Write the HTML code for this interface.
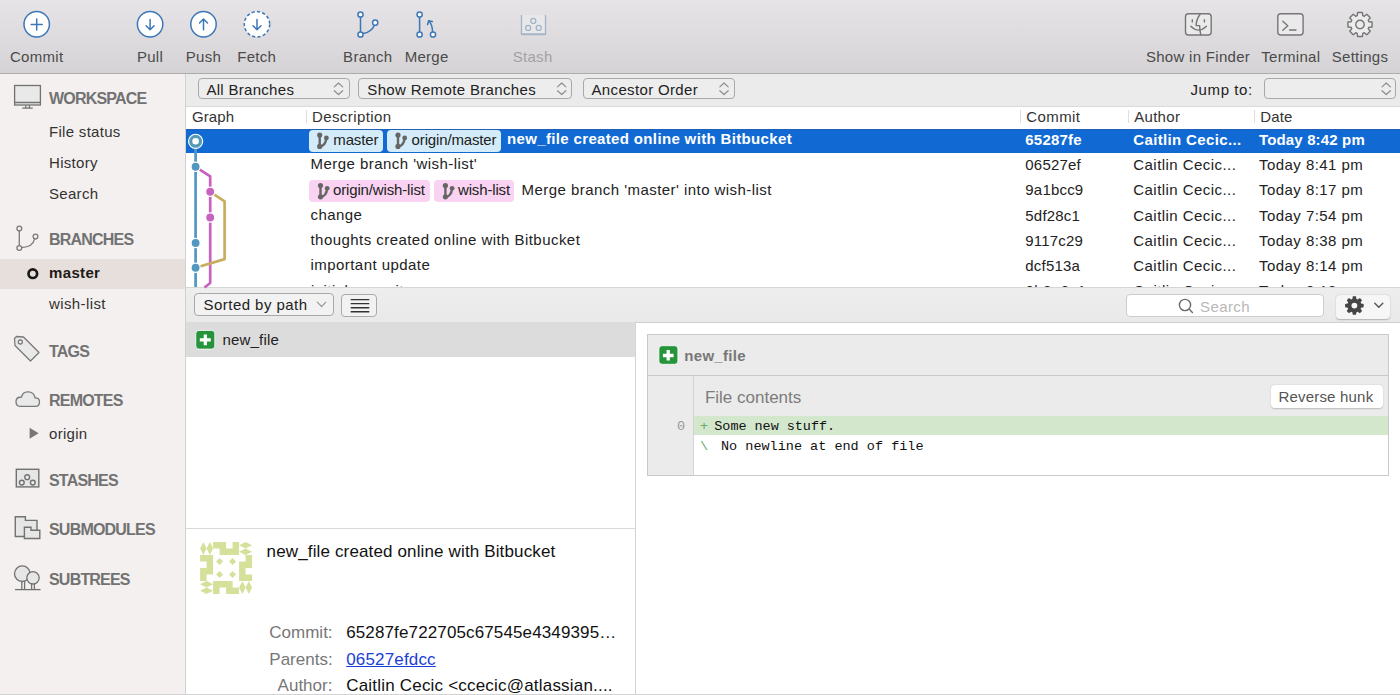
<!DOCTYPE html>
<html><head><meta charset="utf-8">
<style>
html,body{margin:0;padding:0;width:1400px;height:695px;overflow:hidden;background:#fff;}
body{position:relative;font-family:"Liberation Sans",sans-serif;color:#222;}
.a{position:absolute;}
.t{position:absolute;white-space:pre;line-height:15px;font-size:15px;}
#toolbar{left:0;top:0;width:1400px;height:73px;background:linear-gradient(#e6e4e6,#d5d3d5);border-bottom:1px solid #acacac;}
.tl{position:absolute;top:49px;width:120px;text-align:center;font-size:15px;line-height:15px;color:#4a4a4a;white-space:pre;letter-spacing:0.3px;}
#sidebar{left:0;top:74px;width:185px;height:621px;background:#f3f0ef;border-right:1px solid #d3d1d0;}
.sh{font-weight:bold;color:#727272;font-size:16px;letter-spacing:-0.8px;}
.si{color:#333;}
#filter{left:186px;top:74px;width:1214px;height:32px;background:#ebebeb;border-bottom:1px solid #dadada;}
.dd{position:absolute;border:1px solid #a9a9a9;border-radius:4px;background:#ededed;box-sizing:border-box;}
#hdr{left:186px;top:107px;width:1214px;height:22px;background:#fff;}
.hd{color:#333;}
.div{position:absolute;width:1px;background:#dedede;top:110px;height:13px;}
.row{color:#222;letter-spacing:0.45px;}
.sel{color:#fff;font-weight:bold;letter-spacing:0.35px;}
.badge{position:absolute;border-radius:4px;height:22px;}
.bb{background:#d4ecf9;}
.bp{background:#f9d3f1;}
#bbar{left:186px;top:287px;width:1214px;height:34px;background:linear-gradient(#eeeeee,#e9e9e9);border-top:1px solid #d6d6d6;border-bottom:1px solid #cfcfcf;}
#lpane{left:186px;top:322px;width:449px;height:373px;background:#fff;border-right:1px solid #d4d4d4;}
</style></head><body>

<!-- TOOLBAR -->
<div id="toolbar" class="a"></div>
<div class="tl" style="left:-23.35px">Commit</div>
<div class="tl" style="left:90px">Pull</div>
<div class="tl" style="left:143.5px">Push</div>
<div class="tl" style="left:196.75px">Fetch</div>
<div class="tl" style="left:307.75px">Branch</div>
<div class="tl" style="left:366.65px">Merge</div>
<div class="tl" style="left:472.65px;color:#a3a3a3">Stash</div>
<div class="tl" style="left:1138px">Show in Finder</div>
<div class="tl" style="left:1230.8px">Terminal</div>
<div class="tl" style="left:1300px">Settings</div>

<!-- SIDEBAR -->
<div id="sidebar" class="a"></div>
<div class="a" style="left:0;top:258.8px;width:185px;height:29.9px;background:#e6dfdb"></div>
<div class="t sh" style="left:49px;top:90.5px">WORKSPACE</div>
<div class="t si" style="left:49px;top:124px;letter-spacing:0.3px">File status</div>
<div class="t si" style="left:49px;top:155px;letter-spacing:0.3px">History</div>
<div class="t si" style="left:49px;top:186px;letter-spacing:0.3px">Search</div>
<div class="t sh" style="left:49px;top:232.4px">BRANCHES</div>
<div class="t si" style="left:49px;top:265.2px;font-weight:bold;color:#1e1a18;letter-spacing:0.35px">master</div>
<div class="t si" style="left:49px;top:296px;letter-spacing:0.4px">wish-list</div>
<div class="t sh" style="left:49px;top:343.6px">TAGS</div>
<div class="t sh" style="left:49px;top:392.7px">REMOTES</div>
<div class="t si" style="left:49px;top:426px;letter-spacing:0.3px">origin</div>
<div class="t sh" style="left:49px;top:472.7px">STASHES</div>
<div class="t sh" style="left:49px;top:522px">SUBMODULES</div>
<div class="t sh" style="left:49px;top:571.6px">SUBTREES</div>

<!-- FILTER BAR -->
<div id="filter" class="a"></div>
<div class="dd" style="left:197.5px;top:78.2px;width:152px;height:20.8px"></div>
<div class="t" style="left:206.4px;top:81.5px;letter-spacing:0.3px">All Branches</div>
<div class="dd" style="left:358.2px;top:78.2px;width:214.3px;height:20.8px"></div>
<div class="t" style="left:367.3px;top:81.5px;letter-spacing:0.35px">Show Remote Branches</div>
<div class="dd" style="left:582.5px;top:78.2px;width:152px;height:20.8px"></div>
<div class="t" style="left:591.5px;top:81.5px;letter-spacing:0.35px">Ancestor Order</div>
<div class="t" style="left:1190.5px;top:81.5px;letter-spacing:0.6px">Jump to:</div>
<div class="dd" style="left:1264px;top:78.2px;width:132.3px;height:20.8px"></div>

<!-- HEADER -->
<div id="hdr" class="a"></div>
<div class="t hd" style="left:191.9px;top:109.2px;letter-spacing:0.1px">Graph</div>
<div class="div" style="left:306px"></div>
<div class="t hd" style="left:312px;top:109.2px;letter-spacing:0.4px">Description</div>
<div class="div" style="left:1020px"></div>
<div class="t hd" style="left:1026.3px;top:109.2px;letter-spacing:0.4px">Commit</div>
<div class="div" style="left:1128px"></div>
<div class="t hd" style="left:1134.2px;top:109.2px;letter-spacing:0.3px">Author</div>
<div class="div" style="left:1253.5px"></div>
<div class="t hd" style="left:1260.3px;top:109.2px;letter-spacing:0.1px">Date</div>

<!-- ROWS -->
<div class="a" style="left:186px;top:128.9px;width:1214px;height:23.8px;background:#116ad4;box-shadow:inset 0 1px 0 #2160b8"></div>
<div class="badge bb" style="left:308.6px;top:129.7px;width:74px"></div>
<div class="t" style="left:333.3px;top:131.6px;color:#222;letter-spacing:-0.15px">master</div>
<div class="badge bb" style="left:386.9px;top:129.7px;width:114px"></div>
<div class="t" style="left:411.6px;top:131.6px;color:#222;letter-spacing:-0.15px">origin/master</div>
<div class="t sel" style="left:507px;top:131.4px">new_file created online with Bitbucket</div>

<div class="t row" style="left:310.6px;top:156px">Merge branch 'wish-list'</div>

<div class="badge bp" style="left:309.4px;top:180px;width:120.2px"></div>
<div class="t" style="left:333px;top:182px;color:#222;letter-spacing:-0.15px">origin/wish-list</div>
<div class="badge bp" style="left:434.3px;top:180px;width:80.2px"></div>
<div class="t" style="left:458px;top:182px;color:#222;letter-spacing:-0.15px">wish-list</div>
<div class="t row" style="left:521.6px;top:181.5px">Merge branch 'master' into wish-list</div>

<div class="t row" style="left:310.5px;top:206.8px">change</div>
<div class="t row" style="left:310.5px;top:232.1px">thoughts created online with Bitbucket</div>
<div class="t row" style="left:310.5px;top:257.4px">important update</div>
<div class="a" style="left:186px;top:280px;width:1214px;height:7px;overflow:hidden">
  <div class="t row" style="left:125px;top:2.7px">initial commit</div>
  <div class="t row" style="left:839.5px;top:2.7px">0b3a2c1</div>
  <div class="t row" style="left:947.5px;top:2.7px">Caitlin Cecic...</div>
  <div class="t row" style="left:1073px;top:2.7px">Today 8:13 pm</div>
</div>

<div class="t sel" style="letter-spacing:0.2px;left:1025.3px;top:131.8px">65287fe</div>
<div class="t sel" style="left:1133.3px;top:131.8px">Caitlin Cecic...</div>
<div class="t sel" style="letter-spacing:0.15px;left:1259px;top:131.8px">Today 8:42 pm</div>

<div class="t row" style="letter-spacing:0.2px;left:1025.3px;top:157px">06527ef</div>
<div class="t row" style="left:1133.3px;top:157px">Caitlin Cecic...</div>
<div class="t row" style="left:1259px;top:157px">Today 8:41 pm</div>
<div class="t row" style="letter-spacing:0.2px;left:1025.3px;top:182.3px">9a1bcc9</div>
<div class="t row" style="left:1133.3px;top:182.3px">Caitlin Cecic...</div>
<div class="t row" style="left:1259px;top:182.3px">Today 8:17 pm</div>
<div class="t row" style="letter-spacing:0.2px;left:1025.3px;top:207.6px">5df28c1</div>
<div class="t row" style="left:1133.3px;top:207.6px">Caitlin Cecic...</div>
<div class="t row" style="left:1259px;top:207.6px">Today 7:54 pm</div>
<div class="t row" style="letter-spacing:0.2px;left:1025.3px;top:232.9px">9117c29</div>
<div class="t row" style="left:1133.3px;top:232.9px">Caitlin Cecic...</div>
<div class="t row" style="left:1259px;top:232.9px">Today 8:38 pm</div>
<div class="t row" style="letter-spacing:0.2px;left:1025.3px;top:258.2px">dcf513a</div>
<div class="t row" style="left:1133.3px;top:258.2px">Caitlin Cecic...</div>
<div class="t row" style="left:1259px;top:258.2px">Today 8:14 pm</div>

<!-- BOTTOM BAR -->
<div id="bbar" class="a"></div>
<div class="dd" style="left:194.3px;top:292.9px;width:139.3px;height:22.8px;background:#f2f2f2"></div>
<div class="t" style="left:203.6px;top:296.9px;letter-spacing:0.45px">Sorted by path</div>
<div class="dd" style="left:341.4px;top:294.3px;width:35.7px;height:22.8px;background:#f2f2f2"></div>
<div class="a" style="left:1126px;top:294.2px;width:198.4px;height:23.2px;background:#fff;border:1px solid #cdcdcd;border-radius:4px;box-sizing:border-box"></div>
<div class="t" style="left:1200px;top:298.6px;color:#b8b8b8;letter-spacing:0.4px">Search</div>
<div class="a" style="left:1335.8px;top:294.5px;width:54px;height:24px;background:#f6f6f6;border-radius:4px;box-shadow:0 0.5px 1.5px rgba(0,0,0,0.25)"></div>

<!-- LOWER LEFT -->
<div id="lpane" class="a"></div>
<div class="a" style="left:186px;top:322px;width:449px;height:35.3px;background:#dcdcdc"></div>
<div class="t" style="left:222.4px;top:332px;letter-spacing:0.2px">new_file</div>
<div class="a" style="left:186px;top:527.5px;width:449px;height:1px;background:#d9d9d9"></div>
<div class="t" style="left:266.6px;top:544.2px;font-size:17px;letter-spacing:0.14px;color:#111">new_file created online with Bitbucket</div>
<div class="t" style="left:269.3px;top:624.9px;color:#777;font-size:17px">Commit:</div>
<div class="t" style="left:346.2px;top:624.9px;color:#111;font-size:17px;letter-spacing:0.13px">65287fe722705c67545e4349395…</div>
<div class="t" style="left:269.3px;top:651.8px;color:#777;font-size:17px">Parents:</div>
<div class="t" style="left:346.2px;top:651.8px;color:#1a3fd6;text-decoration:underline;font-size:17px;letter-spacing:0.17px">06527efdcc</div>
<div class="t" style="left:277.6px;top:677.9px;color:#777;font-size:17px">Author:</div>
<div class="t" style="left:346.2px;top:677.9px;color:#111;font-size:17px;letter-spacing:0.2px">Caitlin Cecic &lt;ccecic@atlassian....</div>

<!-- DIFF -->
<div class="a" style="left:647px;top:333.7px;width:742px;height:142px;border:1px solid #c9c9c9;box-sizing:border-box;background:#fff"></div>
<div class="a" style="left:648px;top:334.7px;width:740px;height:40px;background:#ebebeb;border-bottom:1px solid #c9c9c9"></div>
<div class="a" style="left:648px;top:375.7px;width:740px;height:40px;background:#ebebeb"></div>
<div class="a" style="left:648px;top:375.7px;width:44.5px;height:99px;background:#ebebeb;border-right:1px solid #d4d4d4"></div>
<div class="a" style="left:693.5px;top:415.8px;width:694.5px;height:19.1px;background:#d3e7cd"></div>
<div class="t" style="left:684.3px;top:347.9px;font-weight:bold;color:#777;letter-spacing:0.3px">new_file</div>
<div class="t" style="left:704.9px;top:389.7px;color:#7c7c7c;font-size:17px">File contents</div>
<div class="a" style="left:1270.5px;top:384.7px;width:112.3px;height:23.8px;background:#fff;border-radius:4px;box-shadow:0 0.5px 1.5px rgba(0,0,0,0.2)"></div>
<div class="t" style="left:1278.4px;top:389.2px;color:#555;letter-spacing:0.2px">Reverse hunk</div>
<div class="t" style="left:677px;top:419.9px;font-family:'Liberation Mono',monospace;font-size:13.5px;line-height:13px;color:#999">0</div>
<div class="t" style="left:700px;top:419.9px;font-family:'Liberation Mono',monospace;font-size:13.5px;line-height:13px;color:#6aa86a">+</div>
<div class="t" style="left:714.3px;top:419.9px;font-family:'Liberation Mono',monospace;font-size:13.5px;line-height:13px;color:#111;letter-spacing:-0.05px">Some new stuff.</div>
<div class="t" style="left:700px;top:439.8px;font-family:'Liberation Mono',monospace;font-size:13.5px;line-height:13px;color:#6aa86a">\</div>
<div class="t" style="left:721px;top:439.8px;font-family:'Liberation Mono',monospace;font-size:13.5px;line-height:13px;color:#111;letter-spacing:0px">No newline at end of file</div>

<div class="a" style="left:0;top:694px;width:1400px;height:1px;background:#d2d2d2"></div>
<!-- ICONS OVERLAY -->
<svg class="a" style="left:0;top:0" width="1400" height="695" viewBox="0 0 1400 695">
<g fill="#fff" stroke="#3c77b8" stroke-width="1.5" stroke-linecap="round" stroke-linejoin="round">
 <circle cx="36.7" cy="24.3" r="12.7"/>
 <path d="M31.2 24.5H42.2M36.7 19V30" fill="none"/>
 <circle cx="150.1" cy="24.3" r="12.7"/>
 <path d="M150.1 19.5V29.8M146.1 25.8L150.1 29.8L154.1 25.8" fill="none"/>
 <circle cx="203.5" cy="24.3" r="12.7"/>
 <path d="M203.5 19V29.8M199.5 23L203.5 19L207.5 23" fill="none"/>
 <circle cx="257" cy="24.3" r="12.7" stroke-dasharray="3.2 2.2" stroke-linecap="butt"/>
 <path d="M257 19.5V29.8M253 25.8L257 29.8L261 25.8" fill="none"/>
 <path d="M360.5 17.1V31.9M362.9 33.6Q371.5 32 374.4 25.2" fill="none"/>
 <circle cx="360.5" cy="14.5" r="2.6"/><circle cx="360.5" cy="34.5" r="2.6"/><circle cx="375.2" cy="22.7" r="2.6"/>
 <path d="M419.6 17.1V31.9M432.6 31.9Q432.5 25 429 21" fill="none"/>
 <path d="M427.6 24.6L428.6 20.8L432.3 21.6" fill="none"/>
 <circle cx="419.6" cy="14.5" r="2.6"/><circle cx="419.6" cy="34.5" r="2.6"/><circle cx="433" cy="34.5" r="2.6"/>
</g>
<g fill="none" stroke="#a3b4c5" stroke-width="1.3">
 <path d="M521.5 15V34.2H545.5V15" fill="#e8e8eb"/>
 <path d="M521.5 34.4H545.5" stroke-width="1.6"/>
 <circle cx="533.3" cy="20.9" r="2.5"/><circle cx="528.2" cy="27.9" r="2.5"/><circle cx="538.7" cy="27.9" r="2.5"/>
</g>
<g fill="none" stroke="#767676" stroke-width="1.4" stroke-linecap="round" stroke-linejoin="round">
 <rect x="1185.5" y="13.8" width="25.7" height="21.2" rx="3" fill="#eaeaea"/>
 <path d="M1200 14.5Q1196 20 1196.2 25.6H1199.6Q1199.8 31 1200.8 34.8"/>
 <path d="M1190.8 26.2Q1198.6 34 1206.4 26.2"/>
 <path d="M1192.3 19.8V22M1204.4 19.8V22"/>
 <rect x="1277.8" y="13.8" width="25.3" height="21.2" rx="3" fill="#eaeaea"/>
 <path d="M1282.8 21.3L1287.8 25.8L1282.8 30.3M1289.6 30H1296"/>
</g>
<g transform="translate(1360,24.5)">
 <path id="gear" fill="#ececec" stroke="#767676" stroke-width="1.4" stroke-linejoin="round" d="M8.88 -2.75 L12.05 -2.44 L12.05 2.44 L8.88 2.75 L8.23 4.34 L10.25 6.80 L6.80 10.25 L4.34 8.23 L2.75 8.88 L2.44 12.05 L-2.44 12.05 L-2.75 8.88 L-4.34 8.23 L-6.80 10.25 L-10.25 6.80 L-8.23 4.34 L-8.88 2.75 L-12.05 2.44 L-12.05 -2.44 L-8.88 -2.75 L-8.23 -4.34 L-10.25 -6.80 L-6.80 -10.25 L-4.34 -8.23 L-2.75 -8.88 L-2.44 -12.05 L2.44 -12.05 L2.75 -8.88 L4.34 -8.23 L6.80 -10.25 L10.25 -6.80 L8.23 -4.34Z"/>
 <circle cx="0" cy="0" r="4.2" fill="none" stroke="#767676" stroke-width="1.4"/>
</g>
<!-- sidebar icons -->
<g fill="none" stroke="#727272" stroke-width="1.3">
 <rect x="14.6" y="85.5" width="25.8" height="19.5" fill="#e9e9e9"/>
 <path d="M14.6 102.5H40.4" stroke-width="1.5"/>
 <path d="M25.8 105.3V107.8M29.4 105.3V107.8M22.3 108.2H32.7" stroke-width="1.3"/>
</g>
<g fill="none" stroke="#7a7a7a" stroke-width="1.3">
 <path d="M19.3 231V245.5M21.5 247.6Q33 247 34.5 239"/>
 <circle cx="19.3" cy="228.6" r="2.4" fill="#f3f0ef"/><circle cx="19.3" cy="248" r="2.4" fill="#f3f0ef"/><circle cx="35.5" cy="236.6" r="2.4" fill="#f3f0ef"/>
</g>
<circle cx="32.8" cy="273.7" r="4.3" fill="none" stroke="#1a1a1a" stroke-width="2.7"/>
<g fill="#e9e9e9" stroke="#7a7a7a" stroke-width="1.3" stroke-linejoin="round">
 <path d="M14.5 338.5L15 345.5L30.5 361L39 352.5L23.5 337L16.5 336.5Z"/>
 <circle cx="20.3" cy="342" r="2" fill="#f4f4f4"/>
 <path d="M19.8 406.3H35.5Q39.5 406.3 39.5 402Q39.5 397.5 35 397.8Q34 391.5 27.5 391.8Q22.5 392 21.5 397Q16 397 16 401.5Q16 406.3 19.8 406.3Z"/>
</g>
<path d="M29.6 427.8L38.6 433.3L29.6 438.8Z" fill="#777"/>
<g fill="#e6e6e6" stroke="#727272" stroke-width="1.4">
 <rect x="16.3" y="469.3" width="22.5" height="17.6"/>
 <circle cx="27.2" cy="477.2" r="2.4" fill="#ececec"/><circle cx="21.8" cy="482.6" r="2.4" fill="#ececec"/><circle cx="32.8" cy="482.6" r="2.4" fill="#ececec"/>
</g>
<g fill="#e6e6e6" stroke="#727272" stroke-width="1.4" stroke-linejoin="miter">
 <path d="M15.3 516.8H25.4V520.4H37V536.5H15.3Z"/>
 <path d="M24.4 527.3H31V530.2H39.8V538.5H24.4Z"/>
</g>
<g fill="#e6e6e6" stroke="#727272" stroke-width="1.3">
 <path d="M21.8 581V589.3M24.6 581V589.3M31.6 583.5V589.3M34.4 583.5V589.3" fill="none"/>
 <circle cx="22.3" cy="573.7" r="7.8"/>
 <circle cx="33" cy="577.8" r="6.2"/>
 <path d="M15 589.6H40.6" fill="none"/>
</g>
<!-- graph -->
<g fill="none" stroke-width="2.7" stroke-linejoin="round">
 <path d="M195.6 141.3V287" stroke="#5297bf"/>
 <path d="M195.6 166.8L210.2 176.4V283L204.5 287.5" stroke="#c862c0"/>
 <path d="M210.2 191.8L224.6 201.4V259.1L195.6 267.7" stroke="#c9ad5f"/>
</g>
<g stroke="#fff" stroke-width="1.3">
 <circle cx="195.6" cy="141.3" r="7" fill="#fff"/>
 <circle cx="195.6" cy="166.8" r="4.6" fill="#5297bf"/>
 <circle cx="210.2" cy="191.8" r="4.6" fill="#c862c0"/>
 <circle cx="210.2" cy="217.5" r="4.6" fill="#c862c0"/>
 <circle cx="195.6" cy="243" r="4.6" fill="#5297bf"/>
 <circle cx="195.6" cy="267.7" r="4.6" fill="#5297bf"/>
</g>
<circle cx="195.6" cy="141.3" r="4.9" fill="#fff" stroke="#549bb8" stroke-width="3.2"/>

<!-- chevrons -->
<g fill="none" stroke="#8e8e8e" stroke-width="1.2" stroke-linecap="round" stroke-linejoin="round">
 <path d="M334.3 86.9L338.5 83L342.7 86.9M334.3 90.7L338.5 94.5L342.7 90.7"/>
 <path d="M557.5 86.9L561.7 83L565.9 86.9M557.5 90.7L561.7 94.5L565.9 90.7"/>
 <path d="M719.8 86.9L724 83L728.2 86.9M719.8 90.7L724 94.5L728.2 90.7"/>
 <path d="M1382 86.9L1386.2 83L1390.4 86.9M1382 90.7L1386.2 94.5L1390.4 90.7"/>
 <path d="M317.3 302.2L321.6 306.5L325.9 302.2" stroke="#9a9a9a"/>
</g>
<g stroke="#333" stroke-width="1.4">
 <path d="M350.7 299.6H369.3M350.7 303.6H369.3M350.7 307.7H369.3M350.7 311.8H369.3"/>
</g>
<g fill="none" stroke="#6a6a6a" stroke-width="1.4" stroke-linecap="round">
 <circle cx="1185" cy="305" r="5.6"/>
 <path d="M1189.1 309.1L1192.4 312.6"/>
</g>
<g transform="translate(1354.4,305.6)">
 <path id="gear2" fill="#454545" d="M6.69 -2.07 L9.26 -1.59 L9.26 1.59 L6.69 2.07 L6.19 3.27 L7.68 5.43 L5.43 7.68 L3.27 6.19 L2.07 6.69 L1.59 9.26 L-1.59 9.26 L-2.07 6.69 L-3.27 6.19 L-5.43 7.68 L-7.68 5.43 L-6.19 3.27 L-6.69 2.07 L-9.26 1.59 L-9.26 -1.59 L-6.69 -2.07 L-6.19 -3.27 L-7.68 -5.43 L-5.43 -7.68 L-3.27 -6.19 L-2.07 -6.69 L-1.59 -9.26 L1.59 -9.26 L2.07 -6.69 L3.27 -6.19 L5.43 -7.68 L7.68 -5.43 L6.19 -3.27Z"/>
 <circle r="2.9" fill="#f6f6f6"/>
</g>
<path d="M1374.8 303.3L1378.8 307.3L1382.8 303.3" fill="none" stroke="#555" stroke-width="1.4" stroke-linecap="round" stroke-linejoin="round"/>
<!-- badge icons -->
<g transform="translate(319.7,135.1)"><g fill="none" stroke="#666" stroke-width="2.4" stroke-linecap="round"><path d="M0 0V11M0.2 11.3Q5.8 11 6.7 2.8"/></g><g fill="#666"><circle cx="0" cy="0" r="2.6"/><circle cx="6.7" cy="2.8" r="2.4"/><circle cx="0" cy="11.3" r="2.6"/></g></g>
<g transform="translate(398,135.1)"><g fill="none" stroke="#666" stroke-width="2.4" stroke-linecap="round"><path d="M0 0V11M0.2 11.3Q5.8 11 6.7 2.8"/></g><g fill="#666"><circle cx="0" cy="0" r="2.6"/><circle cx="6.7" cy="2.8" r="2.4"/><circle cx="0" cy="11.3" r="2.6"/></g></g>
<g transform="translate(320.5,185.5)"><g fill="none" stroke="#666" stroke-width="2.4" stroke-linecap="round"><path d="M0 0V11M0.2 11.3Q5.8 11 6.7 2.8"/></g><g fill="#666"><circle cx="0" cy="0" r="2.6"/><circle cx="6.7" cy="2.8" r="2.4"/><circle cx="0" cy="11.3" r="2.6"/></g></g>
<g transform="translate(445.4,185.5)"><g fill="none" stroke="#666" stroke-width="2.4" stroke-linecap="round"><path d="M0 0V11M0.2 11.3Q5.8 11 6.7 2.8"/></g><g fill="#666"><circle cx="0" cy="0" r="2.6"/><circle cx="6.7" cy="2.8" r="2.4"/><circle cx="0" cy="11.3" r="2.6"/></g></g>

<!-- green plus icons -->
<g>
 <rect x="195.8" y="330.4" width="19" height="18.7" rx="3.2" fill="#25943b" stroke="#fff" stroke-width="0.8"/>
 <path d="M199.8 339.8H210.8M205.3 334.4V345.2" stroke="#fff" stroke-width="3.2"/>
 <rect x="658.9" y="345.7" width="19" height="18.6" rx="3.2" fill="#25943b" stroke="#fff" stroke-width="0.8"/>
 <path d="M662.9 355.5H673.6M668.2 350V360.4" stroke="#fff" stroke-width="3.3"/>
</g>
<!-- avatar -->
<g transform="translate(200.1,542.1)" fill="#d5e19b">
 <path fill-rule="evenodd" d="M13 0H39V13H13Z M13 6.5H19.5V13H13Z M26 0H32.5V6.5H26Z"/>
 <path fill-rule="evenodd" d="M39 13H52V39H39Z M39 13H45.5V19.5H39Z M45.5 26H52V32.5H45.5Z"/>
 <path fill-rule="evenodd" d="M13 39H39V52H13Z M32.5 39H39V45.5H32.5Z M19.5 45.5H26V52H19.5Z"/>
 <path fill-rule="evenodd" d="M0 13H13V39H0Z M6.5 32.5H13V39H6.5Z M0 19.5H6.5V26H0Z"/>
 <path d="M3.25 0L6.5 6.5L3.25 13L0 6.5Z M9.75 0L13 6.5L9.75 13L6.5 6.5Z"/>
 <path d="M42.25 39L45.5 45.5L42.25 52L39 45.5Z M48.75 39L52 45.5L48.75 52L45.5 45.5Z"/>
 <path d="M39 3.25L45.5 0L52 3.25L45.5 6.5Z M39 9.75L45.5 6.5L52 9.75L45.5 13Z"/>
 <path d="M0 42.25L6.5 39L13 42.25L6.5 45.5Z M0 48.75L6.5 45.5L13 48.75L6.5 52Z"/>
 <path d="M19.5 16L23 19.5L19.5 23L16 19.5Z M32.5 16L36 19.5L32.5 23L29 19.5Z M19.5 29L23 32.5L19.5 36L16 32.5Z M32.5 29L36 32.5L32.5 36L29 32.5Z"/>
</g>
</svg>
</body></html>
